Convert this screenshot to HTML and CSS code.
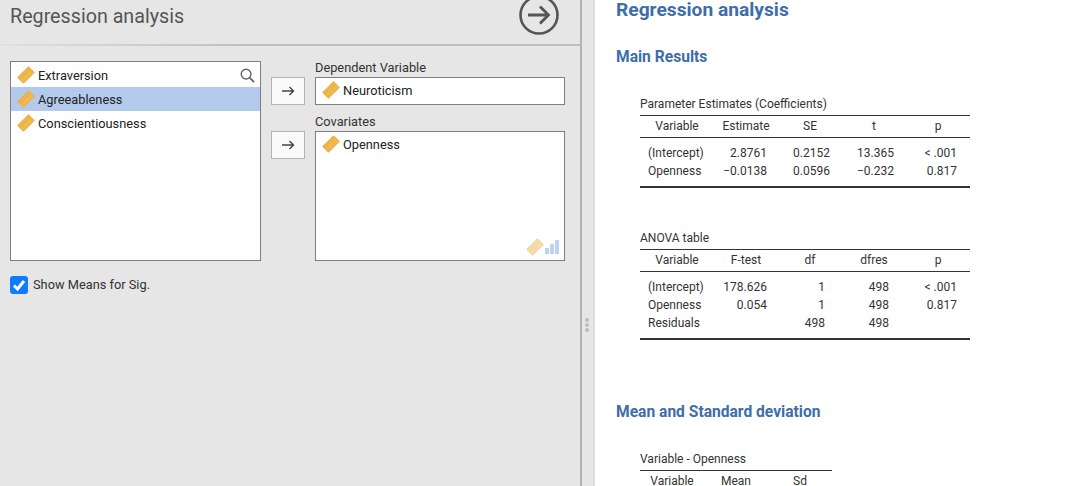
FILE: index.html
```html
<!DOCTYPE html>
<html lang="en">
<head>
    <meta charset="UTF-8">
    <title>Regression analysis</title>
    <link rel="stylesheet" href="styles.css">
</head>
<body>

    <!-- shared icons -->
    <svg width="0" height="0" class="icon-defs">
        <defs>
            <symbol id="icon-ruler" viewBox="0 0 18 18">
                <path d="M11.500 .7 17.300 6.500 6.500 17.300 .7 11.500z" fill="#f0b850" stroke="#e8ad42" stroke-width="1" stroke-linejoin="round"/>
                <path d="M10.500 3.500l1.500 1.500M8.500 5.500l2 2M6.500 7.500l1.500 1.500M4.500 9.500l2 2M2.800 11.500l1.500 1.500" fill="none" stroke="#d99a2c" stroke-width=".7"/>
            </symbol>
            <symbol id="icon-arrow" viewBox="0 0 14 12">
                <path d="M1 6h11.500M8.500 2 12.500 6l-4 4" fill="none" stroke="#444" stroke-width="1.400"/>
            </symbol>
        </defs>
    </svg>

    <div class="options">
        <div class="options-header">
            <h1 class="options-title">Regression analysis</h1>
            <svg class="run-icon" viewBox="0 0 40 40">
                <circle cx="20" cy="20" r="18.500" fill="none" stroke="#555" stroke-width="2.600"/>
                <path d="M9 20h20M21 11.500 29.500 20 21 28.500" fill="none" stroke="#555" stroke-width="2.800"/>
            </svg>
        </div>

        <div class="variables">
            <div class="var-list source">
                <div class="var-row"><svg class="ruler"><use href="#icon-ruler"/></svg>Extraversion</div>
                <div class="var-row selected"><svg class="ruler"><use href="#icon-ruler"/></svg>Agreeableness</div>
                <div class="var-row"><svg class="ruler"><use href="#icon-ruler"/></svg>Conscientiousness</div>
                <svg class="search-icon" viewBox="0 0 16 16">
                    <circle cx="6.500" cy="6.500" r="5.200" fill="none" stroke="#666" stroke-width="1.500"/>
                    <path d="M10.500 10.500 15 15" stroke="#666" stroke-width="2"/>
                </svg>
            </div>

            <div class="target dependent">
                <button class="move-btn"><svg class="arrow"><use href="#icon-arrow"/></svg></button>
                <div class="target-col">
                    <div class="target-label">Dependent Variable</div>
                    <div class="var-list single">
                        <div class="var-row"><svg class="ruler"><use href="#icon-ruler"/></svg>Neuroticism</div>
                    </div>
                </div>
            </div>

            <div class="target covariates">
                <button class="move-btn"><svg class="arrow"><use href="#icon-arrow"/></svg></button>
                <div class="target-col">
                    <div class="target-label">Covariates</div>
                    <div class="var-list multi">
                        <div class="var-row"><svg class="ruler"><use href="#icon-ruler"/></svg>Openness</div>
                        <div class="type-hint">
                            <svg class="ruler"><use href="#icon-ruler"/></svg>
                            <svg class="bars" viewBox="0 0 14 14">
                                <rect x="0" y="8" width="4" height="6"/>
                                <rect x="5" y="4" width="4" height="10"/>
                                <rect x="10" y="0" width="4" height="14"/>
                            </svg>
                        </div>
                    </div>
                </div>
            </div>
        </div>

        <label class="check-row">
            <span class="check-box">
                <svg viewBox="0 0 18 18"><path d="M4 9.500 7.500 13 14 5" fill="none" stroke="#fff" stroke-width="3"/></svg>
            </span>
            Show Means for Sig.
        </label>
    </div>

    <div class="splitter">
        <span class="dot"></span><span class="dot"></span><span class="dot"></span>
    </div>

    <div class="results">
        <h1 class="res-title">Regression analysis</h1>
        <h2 class="res-heading main">Main Results</h2>

        <div class="res-table coef">
            <div class="table-title">Parameter Estimates (Coefficients)</div>
            <table>
                <thead>
                    <tr><th class="c-var">Variable</th><th>Estimate</th><th>SE</th><th>t</th><th>p</th></tr>
                </thead>
                <tbody>
                    <tr><td class="name">(Intercept)</td><td>2.8761</td><td>0.2152</td><td>13.365</td><td>&lt; .001</td></tr>
                    <tr><td class="name">Openness</td><td>−0.0138</td><td>0.0596</td><td>−0.232</td><td>0.817</td></tr>
                </tbody>
            </table>
        </div>

        <div class="res-table anova">
            <div class="table-title">ANOVA table</div>
            <table>
                <thead>
                    <tr><th class="c-var">Variable</th><th>F-test</th><th>df</th><th>dfres</th><th>p</th></tr>
                </thead>
                <tbody>
                    <tr><td class="name">(Intercept)</td><td>178.626</td><td class="int">1</td><td class="int">498</td><td>&lt; .001</td></tr>
                    <tr><td class="name">Openness</td><td>0.054</td><td class="int">1</td><td class="int">498</td><td>0.817</td></tr>
                    <tr><td class="name">Residuals</td><td></td><td class="int">498</td><td class="int">498</td><td></td></tr>
                </tbody>
            </table>
        </div>

        <h2 class="res-heading mean">Mean and Standard deviation</h2>

        <div class="res-table means">
            <div class="table-title">Variable - Openness</div>
            <table>
                <thead>
                    <tr><th>Variable</th><th>Mean</th><th>Sd</th></tr>
                </thead>
            </table>
        </div>
    </div>

</body>
</html>
```

FILE: styles.css
```css
/* --- general --- */
* { margin: 0; padding: 0; box-sizing: border-box; }
html, body { height: 100%; }
body {
    display: flex;
    height: 486px;
    overflow: hidden;
    background-color: #fff;
    color: #333;
    font-family: Roboto, sans-serif;
    font-size: 12.8px;
}
.icon-defs { position: absolute; }

/* --- options panel --- */
.options {
    width: 582px;
    flex-shrink: 0;
    background-color: #e6e6e6;
    border-right: 2px solid #b3b3b3;
}
.options-header {
    height: 46px;
    padding: 0 21px 0 10px;
    display: flex;
    justify-content: space-between;
    align-items: flex-start;
    overflow: hidden;
    border-bottom: 2px solid #bdbdbd;
    border-image: linear-gradient(to right, #e0e0e0, #bdbdbd 45%) 1;
}
.options-title {
    font-size: 19.7px;
    font-weight: 400;
    line-height: 33px;
    color: #555;
}
.run-icon { width: 40px; height: 40px; margin-top: -5px; }

.variables {
    display: grid;
    grid-template-columns: 251px 304px;
    grid-template-rows: 54px 146px;
    margin: 15px 0 0 10px;
}
.var-list {
    position: relative;
    background-color: #fff;
    border: 1px solid #7f7f7f;
    color: #222;
}
.source { grid-row: 1 / 3; padding-top: 1px; }
.single { height: 28px; }
.multi { height: 130px; }
.var-row {
    height: 24px;
    display: flex;
    align-items: center;
    padding: 2px 0 0 6px;
    line-height: 16px;
}
.var-row.selected { background-color: #b4caec; }
.ruler { width: 18px; height: 18px; margin-right: 3px; flex-shrink: 0; }
.var-row .ruler { margin-bottom: 2px; }
.search-icon { position: absolute; top: 6px; right: 5px; width: 15px; height: 15px; }

.target { display: flex; padding-left: 10px; }
.target-col { margin-left: 10px; width: 250px; }
.target-label { height: 16px; line-height: 14px; color: #333; }
.move-btn {
    width: 34px;
    height: 28px;
    margin-top: 16px;
    display: flex;
    align-items: center;
    justify-content: center;
    background-color: #fafafa;
    border: 1px solid #b3b3b3;
}
.arrow { width: 14px; height: 12px; }
.type-hint {
    position: absolute;
    right: 5px;
    bottom: 4px;
    display: flex;
    align-items: center;
    opacity: .5;
}
.type-hint .ruler { margin-right: 1px; }
.bars { width: 14px; height: 14px; fill: #7fa8ea; }

.check-row {
    display: flex;
    align-items: flex-start;
    margin: 15px 0 0 10px;
    height: 18px;
    line-height: 18px;
    color: #333;
}
.check-box {
    width: 18px;
    height: 18px;
    margin-right: 5px;
    background-color: #0f7bff;
    border-radius: 3px;
}
.check-box svg { display: block; }

/* --- splitter --- */
.splitter {
    width: 13px;
    flex-shrink: 0;
    background-color: #e6e6e6;
    border-right: 2px solid #dcdcdc;
    display: flex;
    flex-direction: column;
    align-items: center;
    justify-content: center;
    gap: 1px;
    padding: 163px 2px 0 0;
}
.dot { width: 4px; height: 4px; border-radius: 50%; background-color: #bdbdbd; }

/* --- results --- */
.results { flex: 1; padding-left: 21px; overflow: hidden; }
.res-title { font-size: 19.2px; font-weight: 700; line-height: 20px; color: #3e6da9; }
.res-heading { font-size: 15.6px; font-weight: 700; line-height: 20px; color: #3e6da9; }
.res-heading.main { margin-top: 27px; }
.res-heading.mean { margin-top: 62px; }

.res-table { margin-left: 24px; }
.res-table.coef { margin-top: 29px; width: 330px; }
.res-table.anova { margin-top: 42px; width: 330px; }
.res-table.means { margin-top: 29px; width: 192px; }

.table-title { font-size: 12px; line-height: 16px; height: 19px; color: #333; }
table {
    width: 100%;
    table-layout: fixed;
    border-collapse: separate;
    border-spacing: 0;
    border-top: 1px solid #333;
    font-size: 12px;
    color: #333;
}
.res-table:not(.means) table { border-bottom: 2px solid #333; }
th { font-weight: 400; height: 22px; padding-bottom: 2px; text-align: center; border-bottom: 1px solid #333; }
th.c-var { width: 74px; }
tbody::before { content: ""; display: block; height: 6px; }
tbody::after { content: ""; display: block; height: 6px; }
td { height: 18px; text-align: right; padding-right: 12px; }
td:nth-child(2) { padding-right: 11px; }
td:nth-child(5) { padding-right: 13px; }
td.name { text-align: left; padding: 0 0 0 8px; }
td.int { padding-right: 17px; }
```
